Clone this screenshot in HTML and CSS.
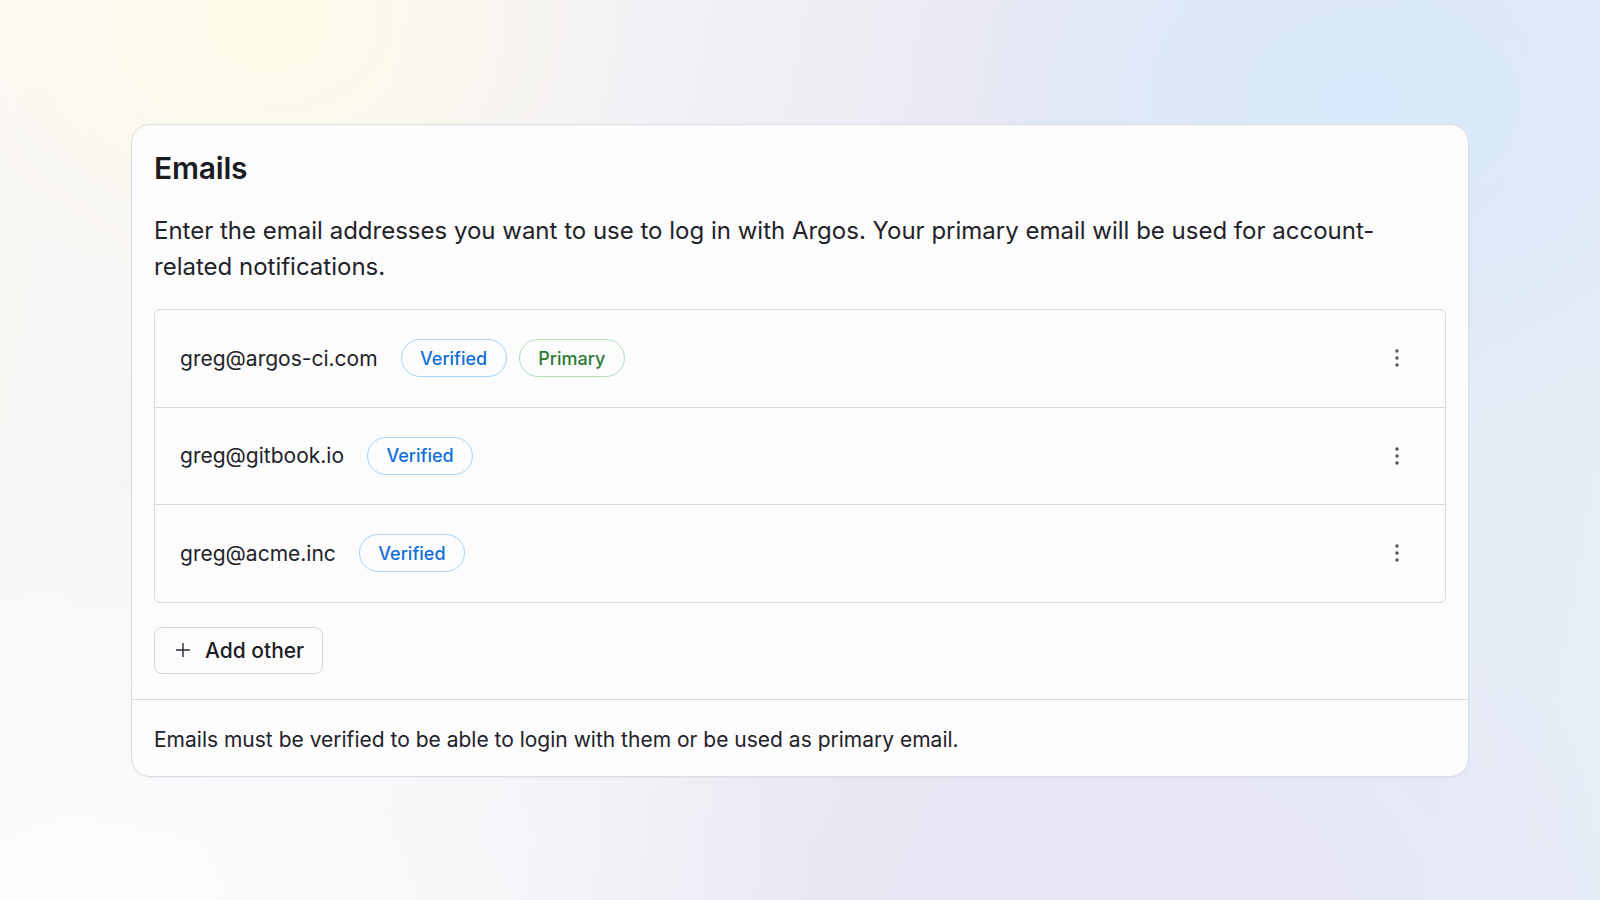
FILE: index.html
```html
<!DOCTYPE html>
<html lang="en">
<head>
<meta charset="utf-8">
<title>Emails</title>
<link rel="stylesheet" href="styles.css">
</head>
<body>
<main class="page">
  <section class="card">
    <div class="card-body">
      <h2 class="card-title">Emails</h2>
      <p class="card-desc">Enter the email addresses you want to use to log in with Argos. Your primary email will be used for account-related notifications.</p>
      <ul class="email-list">
        <li class="email-row">
          <span class="email">greg@argos-ci.com</span>
          <span class="badge badge-blue">Verified</span>
          <span class="badge badge-green">Primary</span>
          <button class="menu-btn" aria-label="Options">
            <svg viewBox="0 0 24 24" width="24" height="24"><circle cx="12" cy="5" r="1.7"/><circle cx="12" cy="12" r="1.7"/><circle cx="12" cy="19" r="1.7"/></svg>
          </button>
        </li>
        <li class="email-row">
          <span class="email">greg@gitbook.io</span>
          <span class="badge badge-blue">Verified</span>
          <button class="menu-btn" aria-label="Options">
            <svg viewBox="0 0 24 24" width="24" height="24"><circle cx="12" cy="5" r="1.7"/><circle cx="12" cy="12" r="1.7"/><circle cx="12" cy="19" r="1.7"/></svg>
          </button>
        </li>
        <li class="email-row">
          <span class="email">greg@acme.inc</span>
          <span class="badge badge-blue">Verified</span>
          <button class="menu-btn" aria-label="Options">
            <svg viewBox="0 0 24 24" width="24" height="24"><circle cx="12" cy="5" r="1.7"/><circle cx="12" cy="12" r="1.7"/><circle cx="12" cy="19" r="1.7"/></svg>
          </button>
        </li>
      </ul>
      <button class="add-btn">
        <svg viewBox="0 0 16 16" width="16" height="16"><path d="M8 1.5v13M1.5 8h13" stroke="currentColor" stroke-width="1.4" fill="none" stroke-linecap="round"/></svg>
        <span>Add other</span>
      </button>
    </div>
    <footer class="card-footer">Emails must be verified to be able to login with them or be used as primary email.</footer>
  </section>
</main>
</body>
</html>
```
FILE: styles.css
```css
html, body {
  margin: 0;
  padding: 0;
}
body {
  width: 1600px;
  height: 900px;
  overflow: hidden;
  font-family: Inter, "Noto Sans", sans-serif;
  color: #1d1d24;
  background:
    radial-gradient(ellipse 360px 280px at 270px 20px, rgba(255, 251, 230, 0.9), rgba(255, 251, 230, 0) 100%),
    radial-gradient(ellipse 460px 340px at 1360px 100px, rgba(214, 233, 250, 1), rgba(214, 233, 250, 0) 100%),
    radial-gradient(ellipse 560px 380px at 1120px 940px, rgba(233, 229, 246, 1), rgba(233, 229, 246, 0) 100%),
    radial-gradient(ellipse 700px 420px at 120px 900px, rgba(253, 250, 254, 1), rgba(253, 250, 254, 0) 100%),
    linear-gradient(100deg, #f9f7f4 0%, #f4f2f5 35%, #e9e7f2 60%, #e4e9f4 80%, #e6eef7 100%);
}
.page {
  padding: 124px 131px 0 131px;
}
.card {
  background: #fcfcfd;
  border: 1px solid #dcdce3;
  border-radius: 19px;
  box-shadow: 0 1px 2px rgba(30, 30, 60, 0.04);
}
.card-body {
  padding: 25px 22px 25px 22px;
}
.card-title {
  margin: 0 0 27px;
  font-size: 30px;
  line-height: 36px;
  font-weight: 600;
  letter-spacing: -0.2px;
  color: #1b1b22;
}
.card-desc {
  margin: 0 0 24px;
  font-size: 24px;
  line-height: 36px;
  color: #222229;
}
.email-list {
  list-style: none;
  margin: 0;
  padding: 0;
  border: 1px solid #d9d9e1;
  border-radius: 6px;
}
.email-row {
  display: flex;
  align-items: center;
  height: 96.5px;
  padding: 0 30px 0 25px;
  border-bottom: 1px solid #d9d9e1;
}
.email-row:last-child {
  border-bottom: 0;
}
.email {
  font-size: 21px;
  color: #222229;
  margin-right: 23px;
}
.badge {
  display: inline-flex;
  align-items: center;
  justify-content: center;
  height: 38px;
  padding: 0 18.5px;
  box-sizing: border-box;
  border-radius: 19px;
  font-size: 18px;
  font-weight: 500;
  margin-right: 12px;
}
.badge-blue {
  border: 1.5px solid #a9d2f7;
  color: #1170d8;
}
.badge-green {
  border: 1.5px solid #b5dcb9;
  color: #2b7a33;
}
.menu-btn {
  margin-left: auto;
  width: 36px;
  height: 36px;
  padding: 0;
  border: 0;
  background: transparent;
  display: flex;
  align-items: center;
  justify-content: center;
  fill: #55555f;
}
.add-btn {
  margin-top: 24px;
  display: flex;
  align-items: center;
  gap: 14px;
  height: 47px;
  padding: 0 18px 0 20px;
  border: 1px solid #d6d6de;
  border-radius: 8px;
  background: #fcfcfd;
  font-family: inherit;
  font-size: 21px;
  font-weight: 500;
  color: #1d1d24;
}
.add-btn svg {
  color: #2a2a33;
}
.card-footer {
  border-top: 1px solid #dcdce3;
  padding: 24px 22px 20px;
  font-size: 21px;
  line-height: 32px;
  color: #222229;
}
```
